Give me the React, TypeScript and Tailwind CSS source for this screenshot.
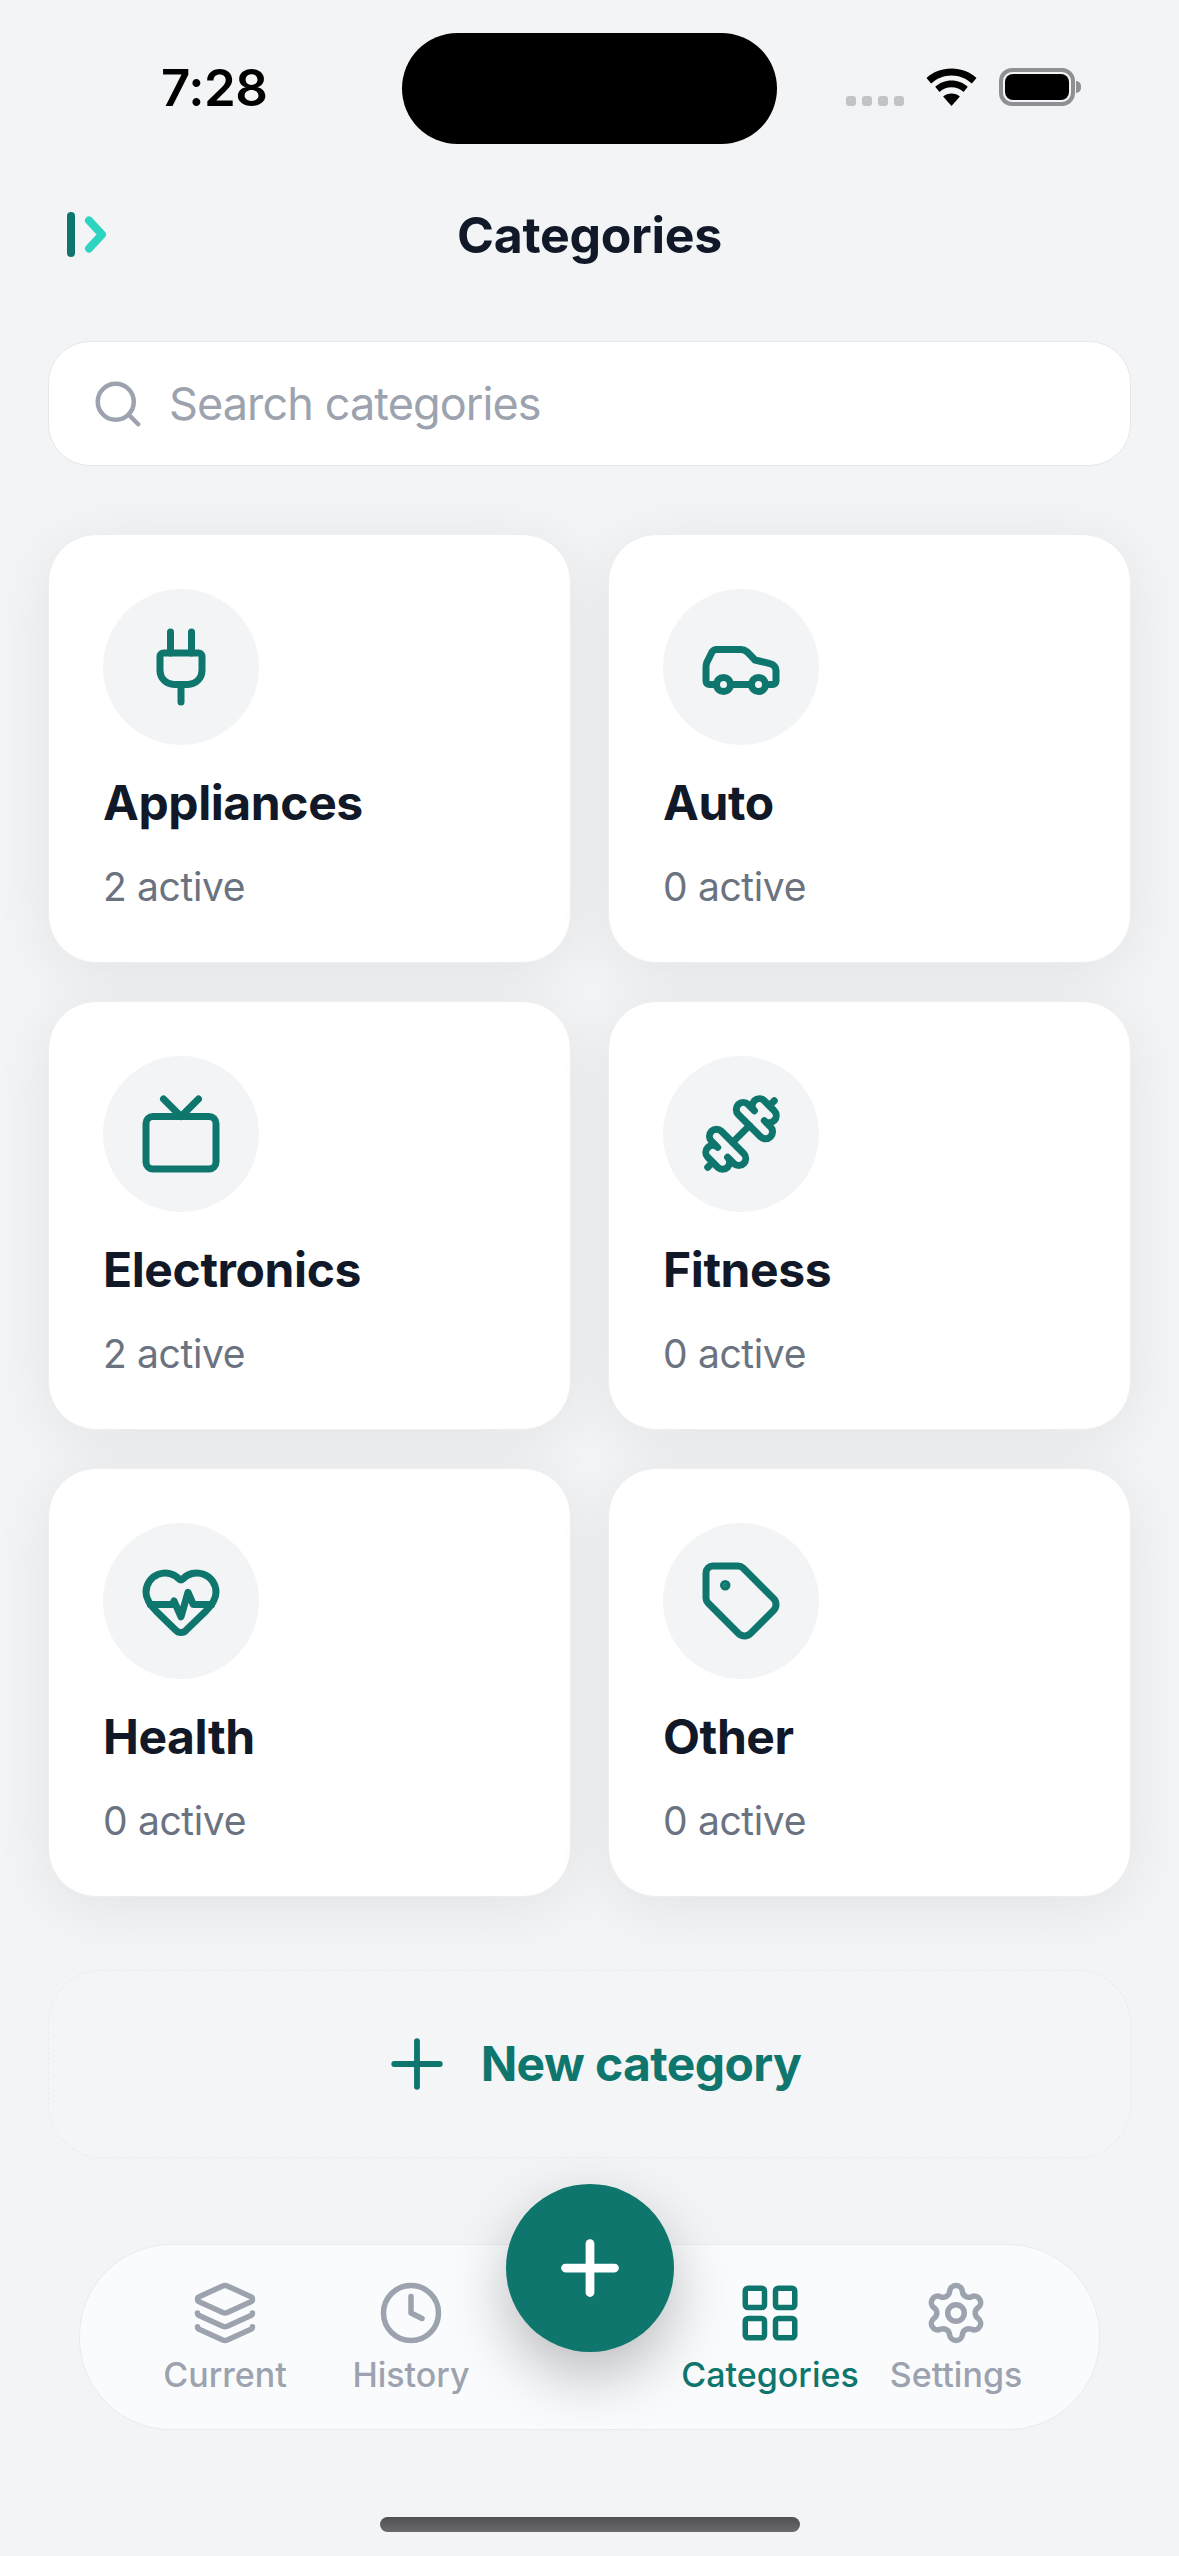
import { Car, Clock, Dumbbell, HeartPulse, Layers, LayoutGrid, Plug, Plus, Search, Settings, Tag, Tv } from "lucide-react";

const categories = [
  { name: "Appliances", count: 2, icon: Plug },
  { name: "Auto", count: 0, icon: Car },
  { name: "Electronics", count: 2, icon: Tv },
  { name: "Fitness", count: 0, icon: Dumbbell },
  { name: "Health", count: 0, icon: HeartPulse },
  { name: "Other", count: 0, icon: Tag },
];

const tabs = [
  { label: "Current", icon: Layers },
  { label: "History", icon: Clock },
  null,
  { label: "Categories", icon: LayoutGrid, active: true },
  { label: "Settings", icon: Settings },
];

function StatusBar() {
  return (
    <div className="relative flex h-[144px] items-start">
      <span className="ml-[161px] mt-[61px] text-[51px] leading-[54px] font-semibold tracking-[-0.5px] text-black">7:28</span>
      {/* dynamic island */}
      <div className="absolute left-[402px] top-[33px] h-[111px] w-[375px] rounded-[56px] bg-black" />
      <div className="absolute left-[846px] top-[68px] flex items-end">
        <div className="flex gap-[6px]">
          <span className="h-[10px] w-[10px] rounded-[3px] bg-[#c2c3c5]" />
          <span className="h-[10px] w-[10px] rounded-[3px] bg-[#c2c3c5]" />
          <span className="h-[10px] w-[10px] rounded-[3px] bg-[#c2c3c5]" />
          <span className="h-[10px] w-[10px] rounded-[3px] bg-[#c2c3c5]" />
        </div>
        <svg className="ml-[22px]" width="51" height="38" viewBox="0 0 51 38">
          <path d="M25.5 .5C15.7 .5 7 4 .5 10l4.600 5.600C10.400 10.500 17.600 7.400 25.500 7.400s15.100 3.100 20.400 8.200l4.600-5.600C44 4 35.300 .5 25.500 .5z" fill="#000" />
          <path d="M25.500 12.500c-6.300 0-12 2.400-16.300 6.300l4.300 5.200c3-2.700 7.400-4.700 12-4.700s9 2 12 4.700l4.300-5.200c-4.300-3.900-10-6.300-16.300-6.300z" fill="#000" />
          <path d="M25.500 25.500c-3.300 0-6.200 1.100-8.400 3l8.400 9.500 8.400-9.500c-2.200-1.900-5.100-3-8.400-3z" fill="#000" />
        </svg>
        <div className="ml-[22px] flex items-center">
          <div className="flex h-[38px] w-[76px] items-center justify-center rounded-[13px] border-[4px] border-[#8f9093] p-[2px]">
            <div className="h-full w-full rounded-[8px] bg-black" />
          </div>
          <div className="ml-[1px] h-[12px] w-[5px] rounded-r-[5px] bg-[#8f9093]" />
        </div>
      </div>
    </div>
  );
}

function Logo() {
  return (
    <svg width="40" height="46" viewBox="0 0 40 46" fill="none" strokeLinecap="round" strokeLinejoin="round">
      <path d="M4 4V41" stroke="#0f766e" strokeWidth="8" />
      <path d="M22 8.500L35 22.500L22 36.500" stroke="#2dd4bf" strokeWidth="8" />
    </svg>
  );
}

export default function App() {
  return (
    <div className="h-[2556px] w-[1179px] overflow-hidden bg-[#f3f4f6] font-['Inter',sans-serif]">
      <StatusBar />

      <div className="relative mt-[46px] flex h-[90px] items-center justify-center">
        <div className="absolute left-[67px] top-[22px]">
          <Logo />
        </div>
        <h1 className="text-[50px] font-bold tracking-[-0.3px] text-[#111827]">Categories</h1>
      </div>

      <div className="px-[48px]">
        <div className="mt-[61px] flex h-[125px] items-center gap-[24px] rounded-[42px] border border-[#e5e7eb] bg-white pl-[42px]">
          <Search size={54} strokeWidth={2} className="text-[#9ca3af]" />
          <span className="text-[45px] tracking-[-0.9px] text-[#9ca3af]">Search categories</span>
        </div>

        <div className="mt-[68px] grid grid-cols-2 gap-x-[37px] gap-y-[38px]">
          {categories.map((c) => {
            const Icon = c.icon;
            return (
              <div
                key={c.name}
                className="h-[429px] rounded-[48px] border border-[#eceef0] bg-white pl-[54px] pt-[54px] shadow-[0_10px_60px_rgba(0,0,0,0.07)]"
              >
                <div className="flex h-[156px] w-[156px] items-center justify-center rounded-full bg-[#f3f4f6]">
                  <Icon size={84} strokeWidth={2} className="text-[#0f766e]" />
                </div>
                <div className="mt-[26px] text-[48px] leading-[64px] font-bold tracking-[-0.4px] text-[#111827]">{c.name}</div>
                <div className="mt-[28px] text-[39px] leading-[48px] tracking-[-0.35px] text-[#6b7280]">{c.count} active</div>
              </div>
            );
          })}
        </div>

        <div className="mt-[73px] flex h-[188px] items-center justify-center gap-[25px] rounded-[54px] border border-dashed border-[#e9ebee] bg-[#f4f5f7]">
          <Plus size={78} strokeWidth={1.8} className="text-[#0f766e]" />
          <span className="text-[48px] font-bold tracking-[-0.6px] text-[#0f766e]">New category</span>
        </div>
      </div>

      <nav className="relative ml-[79px] mt-[86px] grid h-[186px] w-[1021px] grid-cols-[186px_186px_173px_186px_186px] rounded-[92px] border border-[#e9ebee] bg-[#fafbfd] pl-[52px] pt-[35px]">
        {tabs.map((t, i) => {
          if (!t) return <div key={i} />;
          const Icon = t.icon;
          return (
            <div key={t.label} className={`flex flex-col items-center ${t.active ? "text-[#0f766e]" : "text-[#9ca3af]"}`}>
              <Icon size={66} strokeWidth={2} />
              <span className="mt-[7px] whitespace-nowrap text-[34px] leading-[44px] font-medium">{t.label}</span>
            </div>
          );
        })}
        {/* floating add button */}
        <div className="absolute left-[426px] top-[-61px] flex h-[168px] w-[168px] items-center justify-center rounded-full bg-[#0f766e] shadow-[0_24px_60px_rgba(0,0,0,0.25)]">
          <Plus size={84} strokeWidth={2.5} className="text-white" />
        </div>
      </nav>

      <div className="mx-auto mt-[87px] h-[15px] w-[420px] rounded-[8px] bg-gradient-to-b from-[#505053] to-[#6a6a6d]" />
    </div>
  );
}
